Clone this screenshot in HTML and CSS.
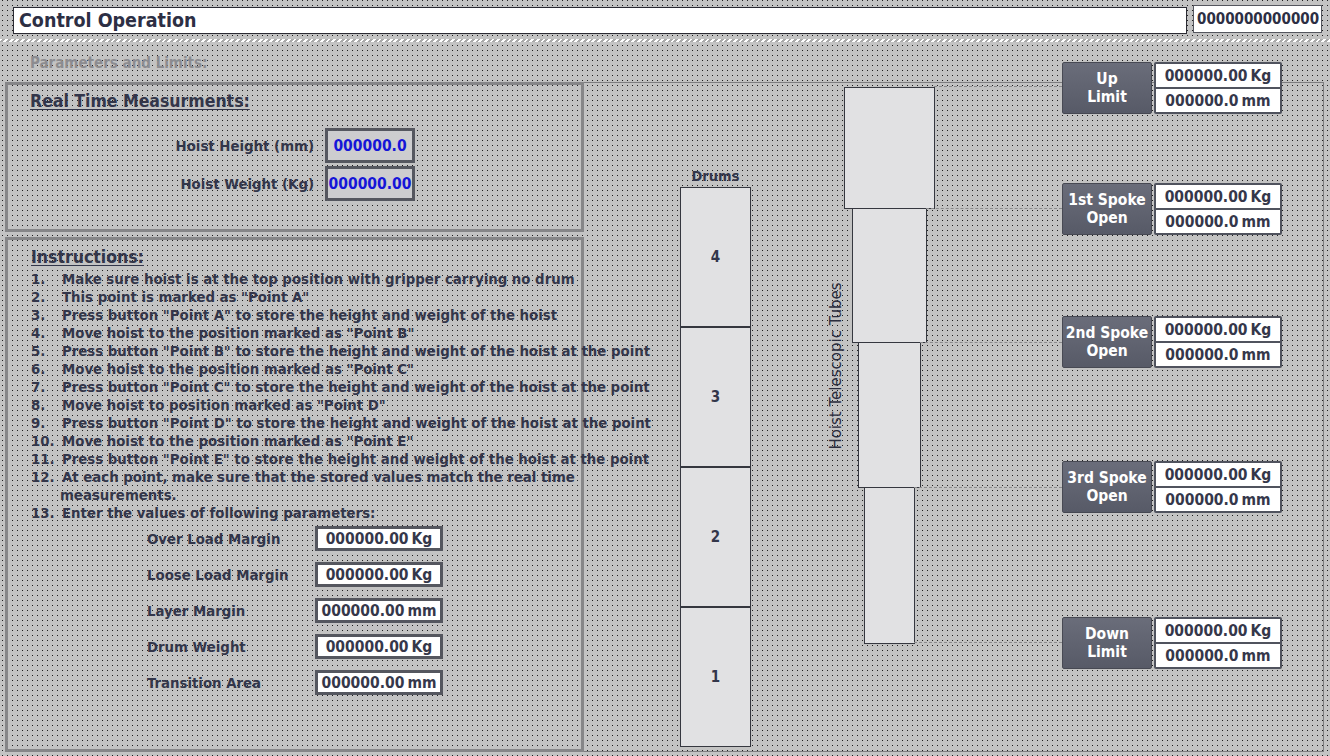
FILE: index.html
```html
<!DOCTYPE html>
<html>
<head>
<meta charset="utf-8">
<title>Control Operation</title>
<link rel="stylesheet" href="styles.css">
</head>
<body>
<header class="top">
  <div class="title">Control Operation</div>
  <div class="stamp">0000000000000</div>
</header>
<div class="sep"></div>
<main class="main">
  <section class="left">
    <div class="sub">Parameters and Limits:</div>
    <div class="panel rt">
      <h2 class="ptitle">Real Time Measurments:</h2>
      <div class="rtgrid">
        <span class="lbl">Hoist Height (mm)</span><span class="rv">000000.0</span>
        <span class="lbl">Hoist Weight (Kg)</span><span class="rv">000000.00</span>
      </div>
    </div>
    <div class="panel ins">
      <h2 class="ptitle">Instructions:</h2>
      <ol class="steps">
        <li><span class="n">1.</span>Make sure hoist is at the top position with gripper carrying no drum</li>
        <li><span class="n">2.</span>This point is marked as "Point A"</li>
        <li><span class="n">3.</span>Press button "Point A" to store the height and weight of the hoist</li>
        <li><span class="n">4.</span>Move hoist to the position marked as "Point B"</li>
        <li><span class="n">5.</span>Press button "Point B" to store the height and weight of the hoist at the point</li>
        <li><span class="n">6.</span>Move hoist to the position marked as "Point C"</li>
        <li><span class="n">7.</span>Press button "Point C" to store the height and weight of the hoist at the point</li>
        <li><span class="n">8.</span>Move hoist to position marked as "Point D"</li>
        <li><span class="n">9.</span>Press button "Point D" to store the height and weight of the hoist at the point</li>
        <li><span class="n">10.</span>Move hoist to the position marked as "Point E"</li>
        <li><span class="n">11.</span>Press button "Point E" to store the height and weight of the hoist at the point</li>
        <li><span class="n">12.</span>At each point, make sure that the stored values match the real time<br><span class="cont">measurements.</span></li>
        <li><span class="n">13.</span>Enter the values of following parameters:</li>
      </ol>
      <div class="params">
        <span class="plbl">Over Load Margin</span><span class="val">000000.00 <span class="unit">Kg</span></span>
        <span class="plbl">Loose Load Margin</span><span class="val">000000.00 <span class="unit">Kg</span></span>
        <span class="plbl">Layer Margin</span><span class="val">000000.00 <span class="unit">mm</span></span>
        <span class="plbl">Drum Weight</span><span class="val">000000.00 <span class="unit">Kg</span></span>
        <span class="plbl">Transition Area</span><span class="val">000000.00 <span class="unit">mm</span></span>
      </div>
    </div>
  </section>

  <section class="diagram">
    <div class="drums">
      <div class="drums-title">Drums</div>
      <div class="drum">4</div>
      <div class="drum">3</div>
      <div class="drum">2</div>
      <div class="drum">1</div>
    </div>

    <div class="tube-label">Hoist Telescopic Tubes</div>
    <div class="tubes">
      <div class="tube t1"></div>
      <div class="tube t2"></div>
      <div class="tube t3"></div>
      <div class="tube t4"></div>
    </div>

    <div class="link l1"></div>
    <div class="link l2"></div>
    <div class="link l3"></div>
    <div class="link l4"></div>
    <div class="link l5"></div>

    <div class="limit g1">
      <div class="btn">Up<br>Limit</div>
      <div class="vals"><div class="v">000000.00 <span class="unit">Kg</span></div><div class="v">000000.0 <span class="unit">mm</span></div></div>
    </div>
    <div class="limit g2">
      <div class="btn">1st Spoke<br>Open</div>
      <div class="vals"><div class="v">000000.00 <span class="unit">Kg</span></div><div class="v">000000.0 <span class="unit">mm</span></div></div>
    </div>
    <div class="limit g3">
      <div class="btn">2nd Spoke<br>Open</div>
      <div class="vals"><div class="v">000000.00 <span class="unit">Kg</span></div><div class="v">000000.0 <span class="unit">mm</span></div></div>
    </div>
    <div class="limit g4">
      <div class="btn">3rd Spoke<br>Open</div>
      <div class="vals"><div class="v">000000.00 <span class="unit">Kg</span></div><div class="v">000000.0 <span class="unit">mm</span></div></div>
    </div>
    <div class="limit g5">
      <div class="btn">Down<br>Limit</div>
      <div class="vals"><div class="v">000000.00 <span class="unit">Kg</span></div><div class="v">000000.0 <span class="unit">mm</span></div></div>
    </div>
  </section>
</main>
</body>
</html>
```

FILE: styles.css
```css
* { box-sizing: border-box; }

html, body {
  margin: 0;
  padding: 0;
}

/* dotted canvas: one dark pixel per 5x5 cell */
body {
  width: 1330px;
  height: 756px;
  overflow: hidden;
  font-family: "DejaVu Sans Condensed", "DejaVu Sans", sans-serif;
  font-stretch: semi-condensed;
  color: #33364a;
  background-color: #1e1e1e;
  background-image:
    linear-gradient(to right, #c3c3c3 4px, transparent 4px),
    linear-gradient(to bottom, #c3c3c3 4px, transparent 4px);
  background-size: 5px 5px;
  background-position: -2px 1px;
}

/* ---------- header ---------- */
.top {
  display: flex;
  gap: 6px;
  height: 39px;
  padding: 7px 8px 0 13px;
}

.title {
  width: 1174px;
  height: 27px;
  background: #fff;
  border: 1px solid #2b2b33;
  padding-left: 5px;
  font-size: 19.5px;
  font-weight: bold;
  line-height: 25px;
  color: #2d2f44;
}

.stamp {
  width: 129px;
  height: 28px;
  margin-top: -2px;
  background: #fff;
  border: 1px solid #55575f;
  padding-left: 3px;
  font-size: 15px;
  font-weight: bold;
  line-height: 26px;
  white-space: nowrap;
  overflow: hidden;
  color: #2d2f44;
}

.sep {
  height: 3px;
  background: repeating-linear-gradient(135deg, #ffffff 0 2px, #a9a9a9 2px 4px);
}

/* ---------- main ---------- */
.main {
  display: grid;
  grid-template-columns: 584px 740px;
  height: 714px;
}

.left {
  padding-left: 5px;
}

.sub {
  height: 40px;
  padding: 13px 0 0 25px;
  font-size: 15px;
  font-weight: bold;
  line-height: 16px;
  color: #8c8c90;
}

.panel {
  border: 3px solid #868688;
}

.ptitle {
  margin: 0;
  font-size: 17.5px;
  font-weight: bold;
  line-height: 20px;
  text-decoration: underline;
  text-underline-offset: 2px;
  color: #33364a;
}

.rt {
  height: 150px;
  padding: 6px 0 0 22px;
}

.rtgrid {
  display: grid;
  grid-template-columns: 284px 90px;
  grid-auto-rows: 35px;
  column-gap: 11px;
  row-gap: 3px;
  margin-top: 17px;
}

.lbl {
  align-self: center;
  text-align: right;
  font-size: 14.8px;
  font-weight: bold;
}

.rv {
  display: flex;
  align-items: center;
  justify-content: center;
  background: #cdcdcf;
  border: 3px solid #55575f;
  color: #1515d8;
  font-size: 15.5px;
  font-weight: bold;
}

.ins {
  height: 515px;
  margin-top: 5px;
  padding: 7px 0 0 23px;
}

.steps {
  list-style: none;
  margin: 3px 0 0;
  padding: 0;
  font-size: 14.8px;
  font-weight: bold;
  line-height: 18px;
  white-space: nowrap;
}

.n {
  display: inline-block;
  width: 31px;
}

.cont {
  padding-left: 29px;
}

.params {
  display: grid;
  grid-template-columns: 168px 128px;
  grid-auto-rows: 25px;
  row-gap: 11px;
  margin: 4px 0 0 116px;
}

.plbl {
  align-self: center;
  font-size: 14.8px;
  font-weight: bold;
}

.val {
  display: flex;
  align-items: center;
  justify-content: center;
  background: #fff;
  border: 3px solid #55575f;
  font-size: 15.5px;
  font-weight: bold;
  color: #35374a;
  white-space: nowrap;
}

.unit {
  margin-left: 3px;
}

/* ---------- diagram ---------- */
.diagram {
  position: relative;
  margin-top: 40px;
  height: 670px;
  border: 1px solid #7c7c7e;
  border-left: none;
}

.drums {
  position: absolute;
  left: 96px;
  top: 84px;
  width: 71px;
  display: flex;
  flex-direction: column;
}

.drums-title {
  height: 20px;
  text-align: center;
  font-size: 14.5px;
  font-weight: bold;
  line-height: 18px;
}

.drum {
  height: 140px;
  display: flex;
  align-items: center;
  justify-content: center;
  background: #e1e1e3;
  border: 1px solid #35373f;
  font-size: 15px;
  font-weight: bold;
}

.tube-label {
  position: absolute;
  left: 252px;
  top: 283px;
  transform: translate(-50%, -50%) rotate(-90deg);
  white-space: nowrap;
  font-family: "DejaVu Sans", sans-serif;
  font-stretch: normal;
  font-size: 15px;
  color: #2b2d3d;
}

.tubes {
  position: absolute;
  left: 260px;
  top: 4px;
  width: 91px;
  display: flex;
  flex-direction: column;
  align-items: center;
}

.tube {
  background: #e1e1e3;
  border: 1px solid #35373f;
  margin-top: -1px;
}
.t1 { width: 91px; height: 122px; margin-top: 0; }
.t2 { width: 75px; height: 135px; }
.t3 { width: 63px; height: 146px; }
.t4 { width: 51px; height: 157px; }

.link {
  position: absolute;
  height: 0;
  border-top: 1px dashed #8a8a8c;
}
.l1 { top: 3px;   left: 350px; width: 128px; }
.l2 { top: 125px; left: 342px; width: 136px; }
.l3 { top: 259px; left: 336px; width: 142px; }
.l4 { top: 404px; left: 330px; width: 148px; }
.l5 { top: 559px; left: 330px; width: 148px; }

.limit {
  position: absolute;
  left: 478px;
  display: flex;
  gap: 2px;
}
.g1 { top: -21px; }
.g2 { top: 100px; }
.g3 { top: 233px; }
.g4 { top: 378px; }
.g5 { top: 534px; }

.btn {
  width: 90px;
  height: 52px;
  display: flex;
  align-items: center;
  justify-content: center;
  text-align: center;
  background: linear-gradient(#6a6d7a, #575a67);
  border: 1px solid #474953;
  border-radius: 2px;
  color: #fff;
  font-size: 15.5px;
  font-weight: bold;
  line-height: 18px;
}

.vals {
  width: 128px;
  height: 52px;
  display: flex;
  flex-direction: column;
  gap: 2px;
  padding: 2px;
  background: #50535e;
  border-radius: 2px;
}

.v {
  flex: 1;
  display: flex;
  align-items: center;
  justify-content: center;
  background: #fff;
  font-size: 15.5px;
  font-weight: bold;
  color: #35374a;
  white-space: nowrap;
}
```
